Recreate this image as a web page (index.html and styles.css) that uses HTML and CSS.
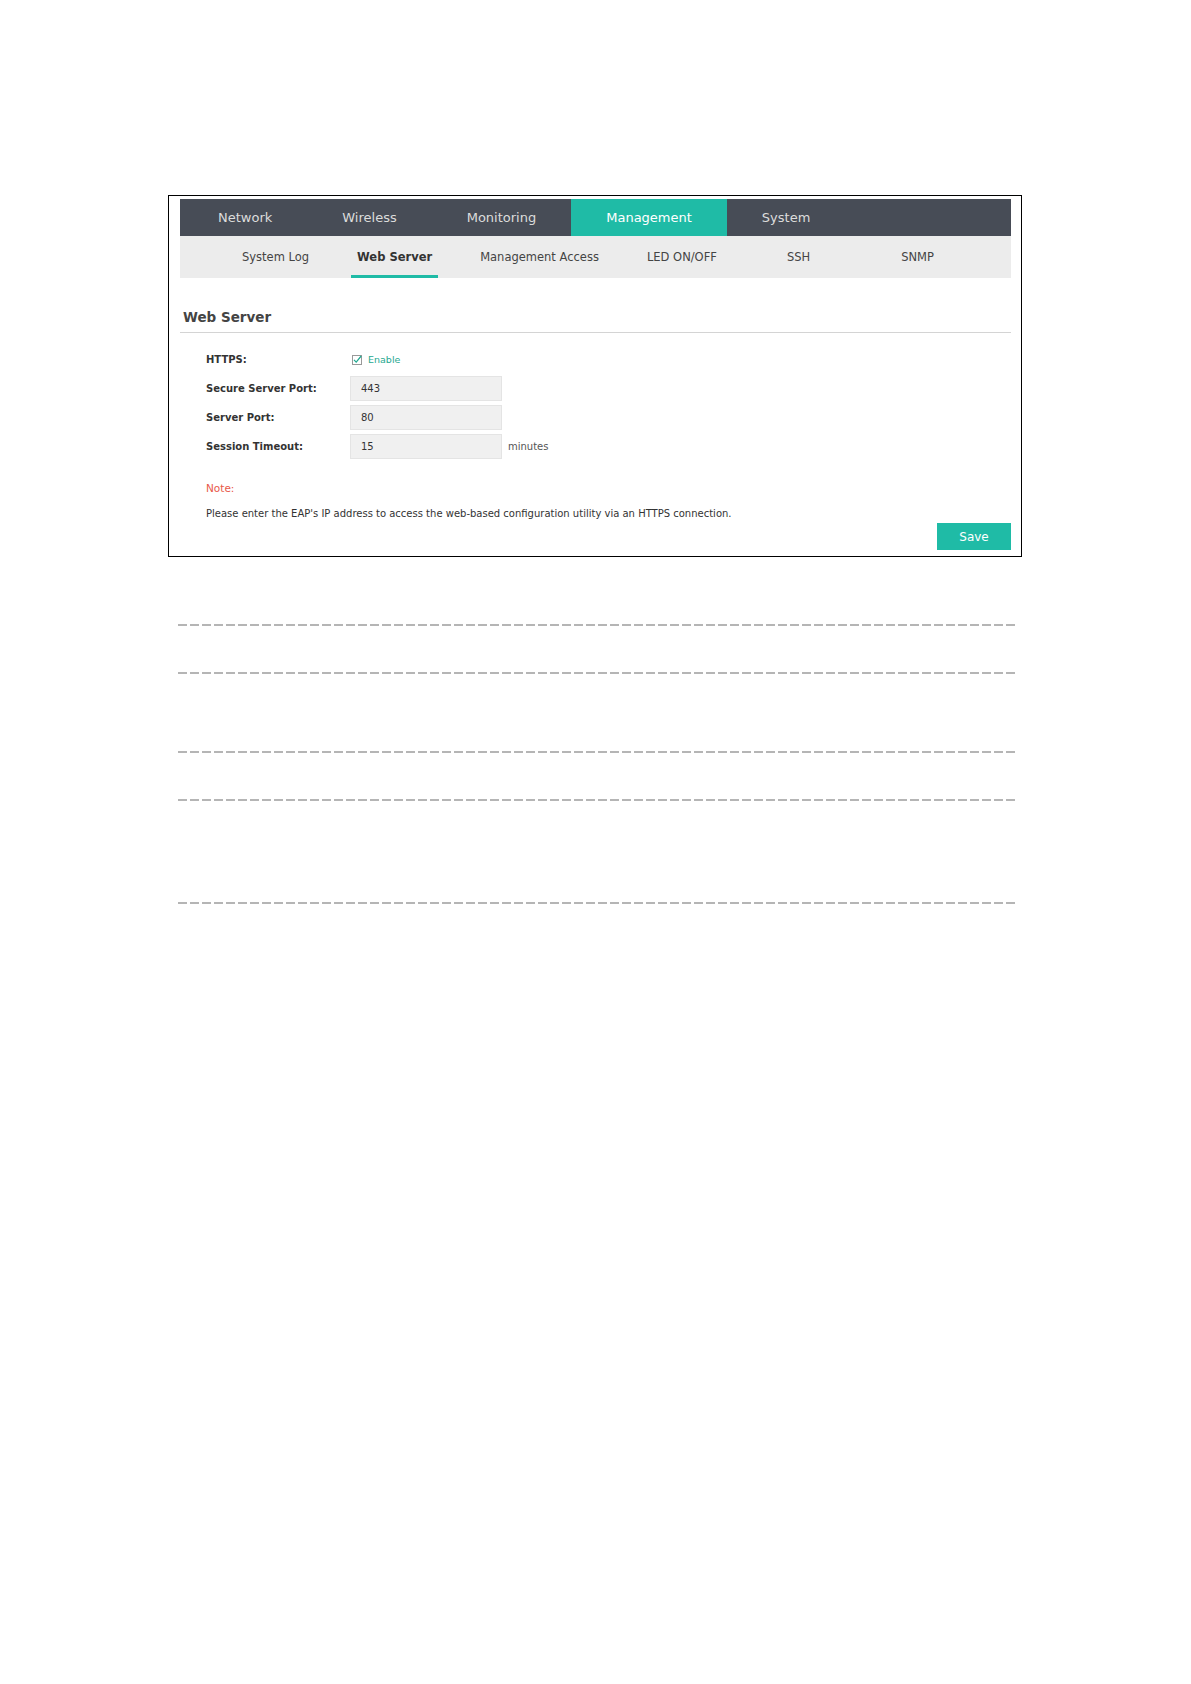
FILE: index.html
```html
<!DOCTYPE html>
<html lang="en">
<head>
  <meta charset="UTF-8">
  <title>Web Server</title>
  <link rel="stylesheet" href="styles.css">
</head>
<body>
  <div class="frame">
    <!-- main menu -->
    <div class="tabs">
      <span class="tab">Network</span>
      <span class="tab">Wireless</span>
      <span class="tab">Monitoring</span>
      <span class="tab active">Management</span>
      <span class="tab">System</span>
    </div>
    <div class="subtabs">
      <span class="subtab">System Log</span>
      <span class="subtab active">Web Server</span>
      <span class="subtab">Management Access</span>
      <span class="subtab">LED ON/OFF</span>
      <span class="subtab ssh">SSH</span>
      <span class="subtab snmp">SNMP</span>
    </div>

    <h2 class="title">Web Server</h2>

    <!-- form -->
    <div class="form">
      <div class="row">
        <label>HTTPS:</label>
        <span class="check">
          <svg width="10" height="10" viewBox="0 0 10 10"><path d="M2 4.8 L4.2 7.2 L9.2 1" fill="none" stroke="#1fa890" stroke-width="1.2"/></svg>
        </span>
        <span class="enable">Enable</span>
      </div>
      <div class="row">
        <label>Secure Server Port:</label>
        <input type="text" value="443">
      </div>
      <div class="row">
        <label>Server Port:</label>
        <input type="text" value="80">
      </div>
      <div class="row">
        <label>Session Timeout:</label>
        <input type="text" value="15">
        <span class="unit">minutes</span>
      </div>

      <div class="note">Note:</div>
      <div class="note-row">
        <p>Please enter the EAP's IP address to access the web-based configuration utility via an HTTPS connection.</p>
        <button>Save</button>
      </div>
    </div>
  </div>

  <!-- blank lines -->
  <div class="rules">
    <div class="rule first"></div>
    <div class="rule"></div>
    <div class="rule wide"></div>
    <div class="rule"></div>
    <div class="rule wider"></div>
  </div>
</body>
</html>
```

FILE: styles.css
```css
body {
  margin: 0;
  background: #fff;
  font-family: "DejaVu Sans", Verdana, sans-serif;
}
.frame {
  margin: 195px 0 0 168px;
  width: 831px;
  border: 1px solid #000;
  padding: 3px 10px 6px 11px;
}
.tabs {
  display: flex;
  height: 37px;
  padding-left: 3px;
  background: #474c56;
}
.tab {
  padding: 0 35px;
  line-height: 37px;
  font-size: 13px;
  color: #dcdcdc;
}
.tab.active {
  background: #1fbba6;
  color: #fff;
}
.subtabs {
  display: flex;
  height: 42px;
  gap: 36px;
  padding-left: 56px;
  background: #ececec;
}
.subtab {
  padding: 0 6px;
  text-align: center;
  line-height: 42px;
  font-size: 11.5px;
  color: #444;
}
.subtab.active {
  font-weight: bold;
  color: #333;
  box-shadow: inset 0 -3px 0 #1fbba6;
}
.subtab.ssh {
  margin-left: 22px;
}
.subtab.snmp {
  margin-left: 43px;
}
.title {
  margin: 30px 0 0;
  padding: 0 3px 6px;
  font-size: 13.5px;
  line-height: 18px;
  color: #444;
  border-bottom: 1px solid #d4d4d4;
}
.form {
  padding: 14px 0 0 26px;
}
.row {
  display: flex;
  align-items: center;
  height: 25px;
  margin-bottom: 4px;
}
.row label {
  width: 144px;
  font-size: 10px;
  font-weight: bold;
  color: #333;
}
.check {
  display: flex;
  align-items: center;
  justify-content: center;
  width: 10px;
  height: 10px;
  margin-left: 2px;
  border: 1px solid #999;
  box-sizing: border-box;
  overflow: visible;
}
.check svg {
  flex: none;
}
.enable {
  margin-left: 6px;
  font-size: 9.5px;
  color: #1fa890;
}
.row input {
  width: 152px;
  height: 25px;
  box-sizing: border-box;
  margin: 0;
  padding: 0 10px;
  border: 1px solid #e4e4e4;
  background: #f0f0f0;
  font-family: "DejaVu Sans", Verdana, sans-serif;
  font-size: 10px;
  color: #333;
}
.unit {
  margin-left: 6px;
  font-size: 10px;
  color: #555;
}
.note {
  margin-top: 22px;
  font-size: 10.5px;
  line-height: 14px;
  color: #e8584a;
}
.note-row {
  display: flex;
  justify-content: space-between;
  align-items: flex-start;
  margin-top: 12px;
}
.note-row p {
  margin: 0;
  font-size: 10px;
  line-height: 14px;
  color: #333;
}
button {
  width: 74px;
  height: 27px;
  margin-top: 16px;
  border: none;
  background: #1fbba6;
  color: #fff;
  font-family: "DejaVu Sans", Verdana, sans-serif;
  font-size: 12px;
}
.rules {
  margin-left: 178px;
  width: 839px;
}
.rule {
  height: 2px;
  margin-top: 46px;
  background: repeating-linear-gradient(to right, #b5b5b5 0 9px, transparent 9px 12px);
}
.rule.first {
  margin-top: 67px;
}
.rule.wide {
  margin-top: 77px;
}
.rule.wider {
  margin-top: 101px;
}
```
